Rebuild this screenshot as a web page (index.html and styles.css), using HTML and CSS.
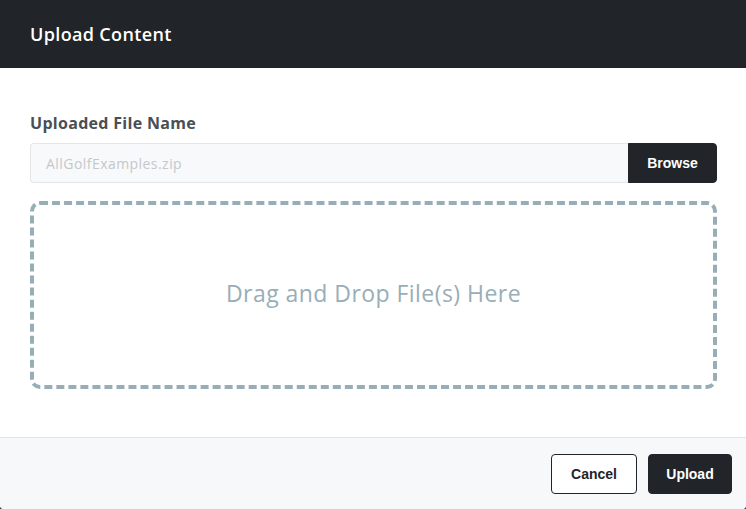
FILE: index.html
```html
<!DOCTYPE html>
<html>
<head>
<meta charset="utf-8">
<link rel="stylesheet" href="styles.css">
</head>
<body>
<div class="modal">
  <div class="modal-header">Upload Content</div>
  <div class="modal-body">
    <label class="label">Uploaded File Name</label>
    <div class="input-group">
      <div class="input">AllGolfExamples.zip</div>
      <button class="btn btn-dark browse">Browse</button>
    </div>
    <div class="dropzone">Drag and Drop File(s) Here</div>
  </div>
  <div class="modal-footer">
    <button class="btn btn-outline">Cancel</button>
    <button class="btn btn-dark">Upload</button>
  </div>
</div>
</body>
</html>
```
FILE: styles.css
```css
* { box-sizing: border-box; }
html, body { margin: 0; padding: 0; }
body {
  background: #3a3d40;
  width: 746px;
  height: 509px;
  overflow: hidden;
  font-family: "Open Sans", "Liberation Sans", sans-serif;
}
.modal {
  width: 746px;
  height: 509px;
  background: #fff;
  border-radius: 0 0 4px 4px;
  display: flex;
  flex-direction: column;
  overflow: hidden;
}
.modal-header {
  height: 68px;
  background: #212529;
  color: #fff;
  font-size: 18px;
  font-weight: 600;
  padding: 0 30px;
  display: flex;
  align-items: center;
  letter-spacing: 0.35px;
}
.modal-body {
  flex: 1;
  padding: 44px 29px 0 30px;
  display: flex;
  flex-direction: column;
}
.label {
  font-size: 16px;
  font-weight: 700;
  color: #4a4f54;
  line-height: 22px;
  margin-bottom: 9px;
  letter-spacing: 0.3px;
}
.input-group {
  display: flex;
  height: 40px;
}
.input {
  flex: 1;
  background: #f8f9fa;
  border: 1px solid #e4e7ea;
  border-right: none;
  border-radius: 4px 0 0 4px;
  font-size: 14px;
  color: #c3c8cc;
  padding: 0 15px;
  display: flex;
  align-items: center;
  letter-spacing: 0.45px;
}
.btn {
  font-family: "Liberation Sans", Arial, sans-serif;
  font-weight: 700;
  font-size: 14px;
  border-radius: 4px;
  height: 40px;
  cursor: pointer;
}
.btn-dark {
  background: #212529;
  color: #fff;
  border: 1px solid #212529;
}
.browse {
  width: 89px;
  border-radius: 0 4px 4px 0;
}
.dropzone {
  margin-top: 18px;
  height: 188px;
  border: 4px dashed #98aeb7;
  border-radius: 10px;
  display: flex;
  align-items: center;
  justify-content: center;
  padding-bottom: 4px;
  font-size: 23px;
  letter-spacing: 0.45px;
  color: #98aeb7;
}
.modal-footer {
  height: 72px;
  background: #f7f8f9;
  border-top: 1px solid #e2e4e6;
  display: flex;
  justify-content: flex-end;
  align-items: center;
  gap: 11px;
  padding: 0 14px;
}
.btn-outline {
  background: #fff;
  border: 1px solid #212529;
  color: #212529;
  width: 86px;
}
.modal-footer .btn-dark { width: 84px; }
```
